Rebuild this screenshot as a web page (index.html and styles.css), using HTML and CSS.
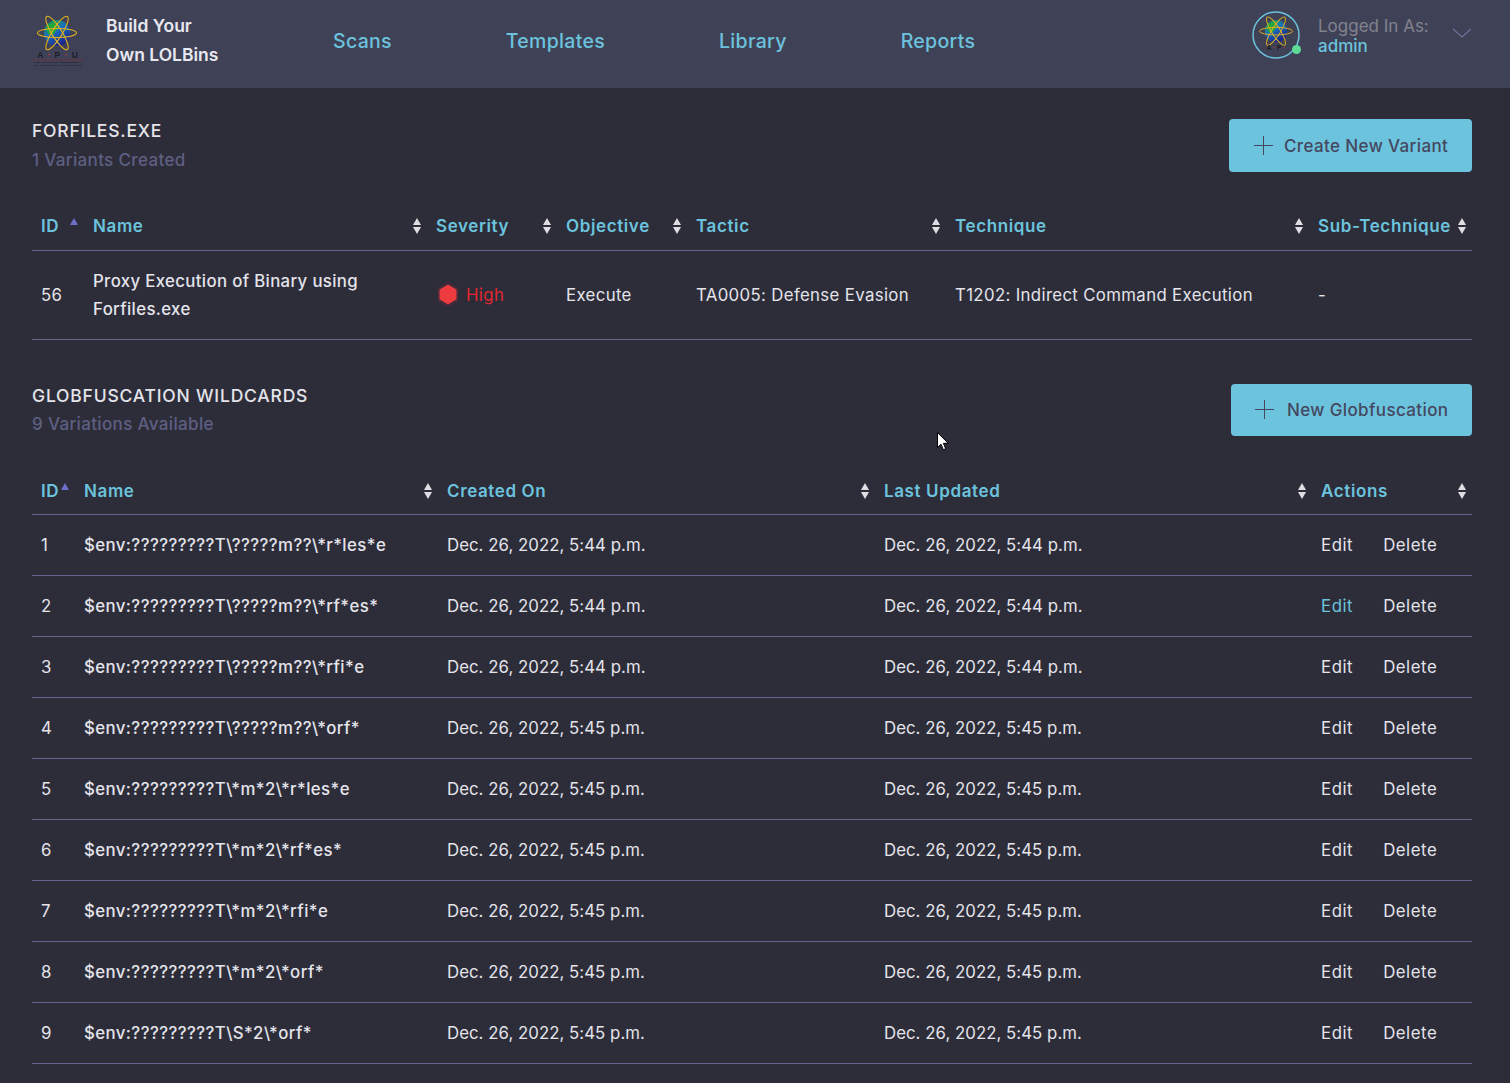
FILE: index.html
```html
<!DOCTYPE html>
<html lang="en">
<head>
<meta charset="utf-8">
<title>Build Your Own LOLBins</title>
<link rel="stylesheet" href="styles.css">
</head>
<body>
<svg class="defs" width="0" height="0">
  <defs>
    <linearGradient id="globe" x1="0.1" y1="0" x2="0.7" y2="1">
      <stop offset="0" stop-color="#19a63a"/><stop offset=".45" stop-color="#1a6fc0"/><stop offset="1" stop-color="#1a1d86"/>
    </linearGradient>
    <g id="atom">
      <circle cx="24" cy="19" r="13" fill="url(#globe)"/>
      <path d="M13 12l9-4 3 6-5 7-5-1z" fill="#22a83c"/>
      <ellipse cx="24" cy="19" rx="19.500" ry="4.500" fill="none" stroke="#e3b21c" stroke-width="1.100"/>
      <ellipse cx="24" cy="19" rx="19.500" ry="5" fill="none" stroke="#e3b21c" stroke-width="1.100" transform="rotate(58 24 19)"/>
      <ellipse cx="24" cy="19" rx="19.500" ry="5" fill="none" stroke="#e3b21c" stroke-width="1.100" transform="rotate(122 24 19)"/>
    </g>
  </defs>
</svg>
<header class="topbar">
  <div class="brand">
    <svg class="logo" viewBox="0 0 54 52" width="54" height="52">
      <use href="#atom" x="2" y="-1"/>
      <text x="27" y="43" class="logo-apu" text-anchor="middle">A<tspan class="logo-dot"> · </tspan>P<tspan class="logo-dot"> · </tspan>U</text>
      <rect x="2" y="44.500" width="50" height=".7" fill="#7c2a35"/>
      <text x="27" y="47.500" class="logo-fine" text-anchor="middle" textLength="48" lengthAdjust="spacingAndGlyphs">ASIA PACIFIC UNIVERSITY</text>
      <text x="27" y="50.500" class="logo-fine" text-anchor="middle" textLength="48" lengthAdjust="spacingAndGlyphs">OF TECHNOLOGY &amp; INNOVATION</text>
    </svg>
    <div class="brand-name">Build Your<br>Own LOLBins</div>
  </div>
  <nav class="nav">
    <a class="nav-link">Scans</a>
    <a class="nav-link">Templates</a>
    <a class="nav-link">Library</a>
    <a class="nav-link">Reports</a>
  </nav>
  <div class="user">
    <div class="avatar">
      <svg viewBox="0 0 48 48" width="48" height="48">
        <circle cx="24" cy="24" r="23" fill="none" stroke="#6cc3dd" stroke-width="1.500"/>
        <g transform="translate(3.600 4) scale(.85)"><use href="#atom"/></g>
        <text x="24" y="39" class="avatar-apu" text-anchor="middle">A<tspan class="logo-dot"> · </tspan>P<tspan class="logo-dot"> · </tspan></text>
      </svg>
      <span class="status"></span>
    </div>
    <div class="user-text">
      <div class="user-label">Logged In As:</div>
      <div class="user-name">admin</div>
    </div>
    <svg class="chevron" viewBox="0 0 20 10" width="20" height="10"><path d="M1 1l9 8 9-8" fill="none" stroke="#6e7096" stroke-width="1.200"/></svg>
  </div>
</header>
<main class="main">
  <section class="section">
    <div class="section-head">
      <div>
        <h2 class="section-title">FORFILES.EXE</h2>
        <p class="section-sub">1 Variants Created</p>
      </div>
      <a class="btn btn-variant"><svg class="plus" viewBox="0 0 19 19" width="19" height="19"><path d="M9.500 0v19M0 9.500h19" stroke="#44475f" stroke-width="1"/></svg>Create New Variant</a>
    </div>
    <table class="table variants">
      <colgroup><col class="v1"><col class="v2"><col class="v3"><col class="v4"><col class="v5"><col class="v6"><col class="v7"></colgroup>
      <thead><tr>
        <th><div class="th"><span>ID</span><i class="sort only-up"></i></div></th>
        <th><div class="th"><span>Name</span><i class="sort"></i></div></th>
        <th><div class="th"><span>Severity</span><i class="sort"></i></div></th>
        <th><div class="th"><span>Objective</span><i class="sort"></i></div></th>
        <th><div class="th"><span>Tactic</span><i class="sort"></i></div></th>
        <th><div class="th"><span>Technique</span><i class="sort"></i></div></th>
        <th><div class="th"><span>Sub-Technique</span><i class="sort"></i></div></th>
      </tr></thead>
      <tbody><tr class="tall">
        <td>56</td>
        <td class="strong">Proxy Execution of Binary using Forfiles.exe</td>
        <td><span class="severity"><svg viewBox="0 0 20 25" width="20" height="25"><path d="M10 .5l9.500 6v12l-9.500 6-9.500-6v-12z" fill="none" stroke="#6e2a38" stroke-width=".8"/><path d="M10 2.500l8.500 5v10l-8.500 5-8.500-5v-10z" fill="#ee3b3f"/></svg>High</span></td>
        <td>Execute</td>
        <td>TA0005: Defense Evasion</td>
        <td>T1202: Indirect Command Execution</td>
        <td>-</td>
      </tr></tbody>
    </table>
  </section>
  <section class="section section-glob">
    <div class="section-head head-glob">
      <div>
        <h2 class="section-title">GLOBFUSCATION WILDCARDS</h2>
        <p class="section-sub">9 Variations Available</p>
      </div>
      <a class="btn btn-glob"><svg class="plus" viewBox="0 0 19 19" width="19" height="19"><path d="M9.500 0v19M0 9.500h19" stroke="#44475f" stroke-width="1"/></svg>New Globfuscation</a>
    </div>
    <table class="table globs">
      <colgroup><col class="g1"><col class="g2"><col class="g3"><col class="g4"><col class="g5"></colgroup>
      <thead><tr>
        <th><div class="th"><span>ID</span><i class="sort only-up"></i></div></th>
        <th><div class="th"><span>Name</span><i class="sort"></i></div></th>
        <th><div class="th"><span>Created On</span><i class="sort"></i></div></th>
        <th><div class="th"><span>Last Updated</span><i class="sort"></i></div></th>
        <th><div class="th"><span>Actions</span><i class="sort"></i></div></th>
      </tr></thead>
      <tbody>
        <tr><td>1</td><td class="strong">$env:?????????T\?????m??\*r*les*e</td><td class="date">Dec. 26, 2022, 5:44 p.m.</td><td class="date">Dec. 26, 2022, 5:44 p.m.</td><td><div class="actions"><a>Edit</a><a>Delete</a></div></td></tr>
        <tr><td>2</td><td class="strong">$env:?????????T\?????m??\*rf*es*</td><td class="date">Dec. 26, 2022, 5:44 p.m.</td><td class="date">Dec. 26, 2022, 5:44 p.m.</td><td><div class="actions"><a class="hover">Edit</a><a>Delete</a></div></td></tr>
        <tr><td>3</td><td class="strong">$env:?????????T\?????m??\*rfi*e</td><td class="date">Dec. 26, 2022, 5:44 p.m.</td><td class="date">Dec. 26, 2022, 5:44 p.m.</td><td><div class="actions"><a>Edit</a><a>Delete</a></div></td></tr>
        <tr><td>4</td><td class="strong">$env:?????????T\?????m??\*orf*</td><td class="date">Dec. 26, 2022, 5:45 p.m.</td><td class="date">Dec. 26, 2022, 5:45 p.m.</td><td><div class="actions"><a>Edit</a><a>Delete</a></div></td></tr>
        <tr><td>5</td><td class="strong">$env:?????????T\*m*2\*r*les*e</td><td class="date">Dec. 26, 2022, 5:45 p.m.</td><td class="date">Dec. 26, 2022, 5:45 p.m.</td><td><div class="actions"><a>Edit</a><a>Delete</a></div></td></tr>
        <tr><td>6</td><td class="strong">$env:?????????T\*m*2\*rf*es*</td><td class="date">Dec. 26, 2022, 5:45 p.m.</td><td class="date">Dec. 26, 2022, 5:45 p.m.</td><td><div class="actions"><a>Edit</a><a>Delete</a></div></td></tr>
        <tr><td>7</td><td class="strong">$env:?????????T\*m*2\*rfi*e</td><td class="date">Dec. 26, 2022, 5:45 p.m.</td><td class="date">Dec. 26, 2022, 5:45 p.m.</td><td><div class="actions"><a>Edit</a><a>Delete</a></div></td></tr>
        <tr><td>8</td><td class="strong">$env:?????????T\*m*2\*orf*</td><td class="date">Dec. 26, 2022, 5:45 p.m.</td><td class="date">Dec. 26, 2022, 5:45 p.m.</td><td><div class="actions"><a>Edit</a><a>Delete</a></div></td></tr>
        <tr><td>9</td><td class="strong">$env:?????????T\S*2\*orf*</td><td class="date">Dec. 26, 2022, 5:45 p.m.</td><td class="date">Dec. 26, 2022, 5:45 p.m.</td><td><div class="actions"><a>Edit</a><a>Delete</a></div></td></tr>
      </tbody>
    </table>
  </section>
</main>
<svg class="cursor" viewBox="0 0 12 19" width="12" height="19"><path d="M.5.500v15l3.500-3.300 2.300 5.500 2.400-1-2.300-5.400h4.800z" fill="#fff" stroke="#000" stroke-width="1"/></svg>
</body>
</html>
```
FILE: styles.css
```css
* { box-sizing: border-box; }
html, body { margin: 0; padding: 0; }
body {
  position: relative;
  height: 1083px;
  overflow: hidden;
  background: #2d2d3a;
  color: #e4e4ea;
  font-family: "Inter", "Liberation Sans", sans-serif;
  font-size: 16.8px;
}
.defs { position: absolute; }
.topbar {
  height: 88px;
  background: #3f4257;
  display: flex;
  align-items: center;
  padding: 0 38px 0 31px;
}
.brand { display: flex; align-items: center; width: 302px; gap: 21px; }
.logo { display: block; margin-top: -6px; flex: none; }
.logo-apu { font: 700 8.500px "Liberation Sans", sans-serif; fill: #1d1e28; letter-spacing: 1px; }
.logo-dot { fill: #c9303a; }
.logo-fine { font: 700 2.500px "Liberation Sans", sans-serif; fill: #1d1e28; }
.brand-name { margin-top: -8px; font-weight: 600; font-size: 17.5px; line-height: 29px; color: #e8e8f0; }
.nav { display: flex; gap: 114px; margin-top: -6px; }
.nav-link { color: #6cc3dd; font-size: 19.5px; font-weight: 500; letter-spacing: .3px; }
.user { display: flex; align-items: center; margin-left: auto; position: relative; }
.avatar { position: relative; width: 48px; height: 48px; margin-right: 18px; margin-top: -18px; }
.avatar svg { display: block; }
.avatar-apu { font: 700 6.500px "Liberation Sans", sans-serif; fill: #1d1d26; }
.status {
  position: absolute; right: -1px; bottom: 5px;
  width: 9px; height: 9px; border-radius: 50%;
  background: #5cdc94;
}
.user-text { margin-top: -17px; width: 134px; line-height: 20px; font-size: 17px; }
.user-label { color: #82828e; }
.user-name { color: #6cc3dd; font-weight: 500; }
.chevron { display: block; margin-top: -22px; }
.main { padding: 31px 38px 0 32px; }
.section-head { display: flex; justify-content: space-between; align-items: flex-start; height: 53px; margin-bottom: 30px; }
.head-glob { height: 52px; margin-bottom: 31px; }
.section-glob { margin-top: 44px; }
.section-title { margin: 2px 0 0; font-size: 17.500px; line-height: 20px; font-weight: 500; letter-spacing: .8px; color: #e4e4ea; }
.section-sub { margin: 9px 0 0; font-size: 17px; line-height: 20px; font-weight: 500; letter-spacing: .35px; color: #5e5f82; }
.head-glob .section-sub { margin-top: 8px; }
.btn {
  display: flex; align-items: center;
  height: 100%;
  background: #6cc3dd;
  color: #44475f;
  font-size: 17px;
  font-weight: 500;
  letter-spacing: .38px;
  border-radius: 4px;
}
.btn-variant { width: 243px; padding-left: 25px; }
.btn-glob { width: 241px; padding-left: 24px; }
.btn-variant .plus { margin-right: 11px; }
.plus { display: block; margin-right: 13px; flex: none; }
.table { width: 1440px; border-collapse: collapse; table-layout: fixed; }
.table th { height: 48px; padding: 0 5px 0 9px; border-bottom: 1px solid #63648f; font-weight: 600; color: #6cc3dd; font-size: 17px; letter-spacing: .62px; text-align: left; }
.globs th { padding-top: 2px; }
.th { display: flex; align-items: center; justify-content: space-between; }
.table td { height: 61px; padding: 0 9px; border-bottom: 1px solid #63648f; letter-spacing: .35px; }
.table td.date { letter-spacing: .04px; }
.table .tall td { height: 89px; line-height: 28px; }
.strong { font-weight: 500; }
.globs .strong { letter-spacing: .42px; }
.tall .strong { padding-right: 50px; }
.v1 { width: 52px; } .v2 { width: 343px; } .v3 { width: 130px; } .v4 { width: 130px; }
.v5 { width: 259px; } .v6 { width: 363px; } .v7 { width: 163px; }
.g1 { width: 43px; } .g2 { width: 363px; } .g3 { width: 437px; } .g4 { width: 437px; } .g5 { width: 160px; }
.sort { position: relative; display: block; flex: none; width: 9px; height: 16px; }
.sort::before, .sort::after {
  content: ""; position: absolute; left: 0;
  border-left: 4.500px solid transparent;
  border-right: 4.500px solid transparent;
}
.sort::before { top: 0; border-bottom: 7px solid #dedee3; }
.sort::after { bottom: 0; border-top: 7px solid #dedee3; }
.sort.only-up::before { border-bottom-color: #6e6ecb; }
.sort.only-up::after { display: none; }
.severity { display: flex; align-items: center; gap: 8px; color: #e3262e; padding-left: 2px; }
.severity svg { display: block; flex: none; }
.actions { display: flex; gap: 30px; letter-spacing: .55px; }
.actions .hover { color: #6cc3dd; }
.cursor { position: absolute; left: 937px; top: 432px; }
```
